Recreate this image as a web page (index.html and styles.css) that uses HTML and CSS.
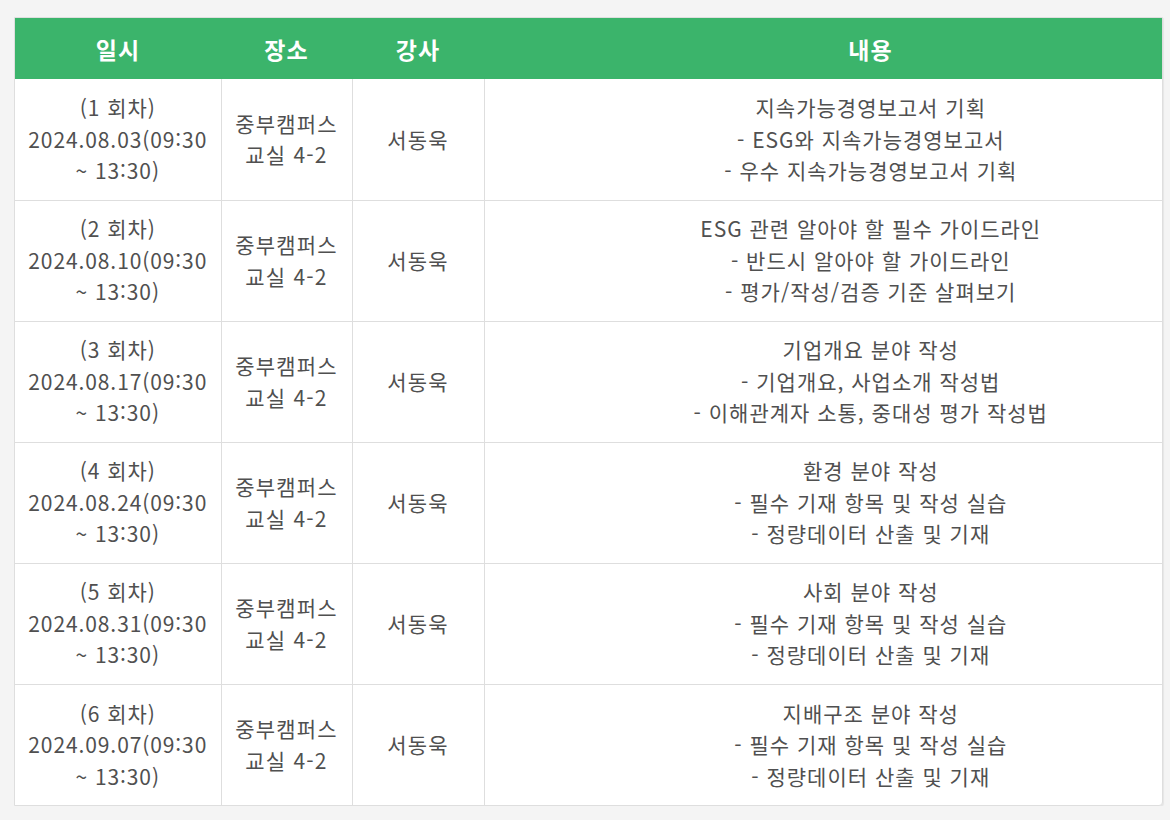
FILE: index.html
```html
<!DOCTYPE html>
<html lang="ko">
<head>
<meta charset="utf-8">
<link rel="stylesheet" href="styles.css">
</head>
<body>
<div class="wrap">
<table class="sched">
<colgroup>
<col class="c1"><col class="c2"><col class="c3"><col class="c4">
</colgroup>
<thead>
<tr><th>일시</th><th>장소</th><th>강사</th><th>내용</th></tr>
</thead>
<tbody>
<tr>
<td class="date">(1 회차)<br>2024.08.03(09:30<br>~ 13:30)</td>
<td class="place">중부캠퍼스<br>교실 4-2</td>
<td class="place">서동욱</td>
<td class="text">지속가능경영보고서 기획<br>- ESG와 지속가능경영보고서<br>- 우수 지속가능경영보고서 기획</td>
</tr>
<tr>
<td class="date">(2 회차)<br>2024.08.10(09:30<br>~ 13:30)</td>
<td class="place">중부캠퍼스<br>교실 4-2</td>
<td class="place">서동욱</td>
<td class="text">ESG 관련 알아야 할 필수 가이드라인<br>- 반드시 알아야 할 가이드라인<br>- 평가/작성/검증 기준 살펴보기</td>
</tr>
<tr>
<td class="date">(3 회차)<br>2024.08.17(09:30<br>~ 13:30)</td>
<td class="place">중부캠퍼스<br>교실 4-2</td>
<td class="place">서동욱</td>
<td class="text">기업개요 분야 작성<br>- 기업개요, 사업소개 작성법<br>- 이해관계자 소통, 중대성 평가 작성법</td>
</tr>
<tr>
<td class="date">(4 회차)<br>2024.08.24(09:30<br>~ 13:30)</td>
<td class="place">중부캠퍼스<br>교실 4-2</td>
<td class="place">서동욱</td>
<td class="text">환경 분야 작성<br>- 필수 기재 항목 및 작성 실습<br>- 정량데이터 산출 및 기재</td>
</tr>
<tr>
<td class="date">(5 회차)<br>2024.08.31(09:30<br>~ 13:30)</td>
<td class="place">중부캠퍼스<br>교실 4-2</td>
<td class="place">서동욱</td>
<td class="text">사회 분야 작성<br>- 필수 기재 항목 및 작성 실습<br>- 정량데이터 산출 및 기재</td>
</tr>
<tr>
<td class="date">(6 회차)<br>2024.09.07(09:30<br>~ 13:30)</td>
<td class="place">중부캠퍼스<br>교실 4-2</td>
<td class="place">서동욱</td>
<td class="text">지배구조 분야 작성<br>- 필수 기재 항목 및 작성 실습<br>- 정량데이터 산출 및 기재</td>
</tr>
</tbody>
</table>
</div>
</body>
</html>
```
FILE: styles.css
```css
html, body {
  margin: 0;
  padding: 0;
  background: #f4f4f4;
}
body {
  padding: 17px 9px 0 14px;
  font-family: "Noto Sans CJK KR", "Noto Sans", sans-serif;
}
.wrap {
  width: 1147px;
  background: #fff;
  border: 1px solid #dedede;
  border-radius: 0 0 4px 0;
  box-shadow: 1px 1px 1px rgba(0,0,0,0.06);
  overflow: hidden;
}
.sched {
  width: 1242px;
  border-collapse: collapse;
  table-layout: fixed;
}
.c1 { width: 206px; }
.c2 { width: 131px; }
.c3 { width: 132px; }
.sched th {
  background: #3bb46b;
  color: #fff;
  font-size: 23px;
  font-weight: 700;
  letter-spacing: 1px;
  height: 61px;
  padding: 0;
  text-align: center;
}
.sched td {
  height: 121px;
  padding: 0;
  box-sizing: border-box;
  text-align: center;
  vertical-align: middle;
  color: #505050;
  font-size: 21px;
  font-weight: 400;
  line-height: 31.5px;
  border-right: 1px solid #dedede;
  border-bottom: 1px solid #dedede;
}
.sched td.date { letter-spacing: 0.9px; }
.sched td.place { letter-spacing: 1.2px; }
.sched td.text { letter-spacing: 1px; }
.sched td:last-child { border-right: 0; }
.sched tr:last-child td { border-bottom: 0; }
```
